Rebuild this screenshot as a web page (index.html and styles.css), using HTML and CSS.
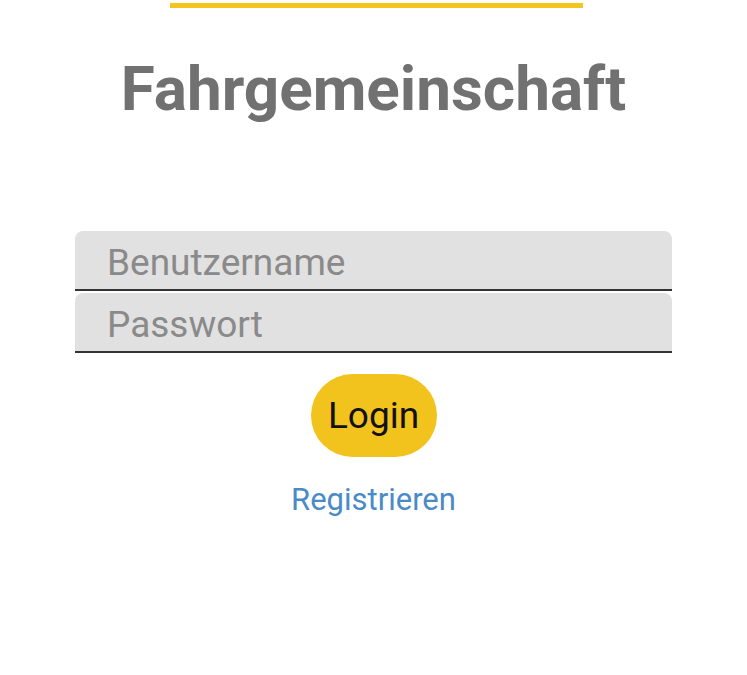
FILE: index.html
```html
<!DOCTYPE html>
<html lang="en">
  <head>
    <meta charset="UTF-8" />
    <meta name="viewport" content="width=device-width, initial-scale=1.0" />
    <title>Fahrgemeinschaft</title>
    <link rel="stylesheet" href="styles.css">
  </head>
  <body>
    <div class="page">
      <div class="topbar"></div>
      <h1 class="title">Fahrgemeinschaft</h1>

      <form class="login">
        <div class="fields">
          <input class="field" type="text" placeholder="Benutzername" />
          <input class="field" type="password" placeholder="Passwort" />
        </div>
        <button class="btn" type="button">Login</button>
        <a class="register" href="#">Registrieren</a>
      </form>
    </div>
  </body>
</html>
```

FILE: styles.css
```css
*,
*::before,
*::after {
  padding: 0;
  margin: 0;
  box-sizing: border-box;
}

body {
  background-color: #ffffff;
  font-family: Roboto, "Noto Sans", sans-serif;
}

.page {
  display: flex;
  flex-direction: column;
  align-items: center;
  padding-top: 3px;
}

.topbar {
  width: 413px;
  height: 5px;
  margin-left: 6px;
  background-color: #f4c41f;
}

.title {
  margin-top: 45px;
  font-size: 62px;
  line-height: 72px;
  font-weight: bold;
  color: #717171;
}

.login {
  margin-top: 106px;
  width: 597px;
  display: flex;
  flex-direction: column;
  align-items: center;
}

.fields {
  width: 100%;
  display: flex;
  flex-direction: column;
  gap: 2px;
}

.field {
  width: 100%;
  height: 60px;
  border: none;
  border-bottom: 2px solid #333333;
  border-radius: 8px 8px 0 0;
  background-color: #e1e1e1;
  padding: 5px 32px 0;
  font-family: Roboto, "Noto Sans", sans-serif;
  font-size: 37px;
  color: #333333;
  outline: none;
}

.field::placeholder {
  color: #8a8a8a;
}

.btn {
  margin-top: 21px;
  width: 126px;
  height: 83px;
  border: none;
  border-radius: 42px;
  background-color: #f2c31c;
  font-family: Roboto, "Noto Sans", sans-serif;
  font-size: 37px;
  color: #111111;
}

.register {
  margin-top: 24px;
  font-size: 31px;
  color: #4a8bc7;
  text-decoration: none;
}
```
